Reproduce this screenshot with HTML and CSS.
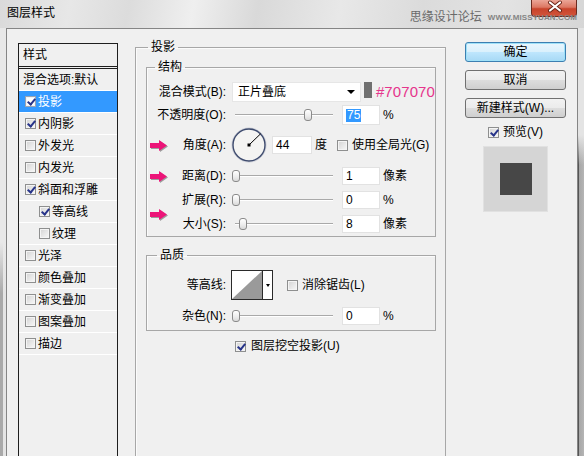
FILE: index.html
```html
<!DOCTYPE html>
<html lang="zh">
<head>
<meta charset="utf-8">
<title>图层样式</title>
<link rel="stylesheet" href="styles.css">
</head>
<body>
<div class="window">
  <div class="titlebar">
    <span class="title">图层样式</span>
    <div class="wm">
      <span class="wm-cn">思缘设计论坛</span>
      <span class="wm-url">WWW.MISSYUAN.COM</span>
    </div>
    <div class="close">
      <svg width="46" height="17" viewBox="0 0 46 17">
        <path d="M19 3.5 L29 11.5 M29 3.5 L19 11.5" stroke="#6a2418" stroke-width="4" stroke-linecap="round"/>
        <path d="M19 3.5 L29 11.5 M29 3.5 L19 11.5" stroke="#ffffff" stroke-width="2.2" stroke-linecap="round"/>
      </svg>
    </div>
  </div>
  <div class="frame">
    <div class="lframe"></div>
    <div class="content">
      <div class="stylelist">
        <div class="list-head">样式</div>
        <div class="list-item plain">混合选项:默认</div>
        <div class="list-item sel"><span class="cb on"></span>投影</div>
        <div class="list-item"><span class="cb on"></span>内阴影</div>
        <div class="list-item"><span class="cb"></span>外发光</div>
        <div class="list-item"><span class="cb"></span>内发光</div>
        <div class="list-item"><span class="cb on"></span>斜面和浮雕</div>
        <div class="list-item sub"><span class="cb on"></span>等高线</div>
        <div class="list-item sub"><span class="cb"></span>纹理</div>
        <div class="list-item"><span class="cb"></span>光泽</div>
        <div class="list-item"><span class="cb"></span>颜色叠加</div>
        <div class="list-item"><span class="cb"></span>渐变叠加</div>
        <div class="list-item"><span class="cb"></span>图案叠加</div>
        <div class="list-item"><span class="cb"></span>描边</div>
      </div>

      <fieldset class="group outer">
        <legend class="lg-outer">投影</legend>

        <fieldset class="group inner struct">
          <legend class="lg-struct">结构</legend>

          <div class="row r1">
            <div class="lbl">混合模式(B):</div>
            <div class="select"><span>正片叠底</span><span class="tri"></span></div>
            <span class="swatch"></span>
            <span class="hex">#707070</span>
          </div>

          <div class="row r2">
            <div class="lbl">不透明度(O):</div>
            <div class="slider"><span class="thumb" style="left:72px"></span></div>
            <div class="num"><span class="selected">75</span></div>
            <span class="unit">%</span>
          </div>

          <div class="row r3">
            <div class="lbl"><svg class="arrow" width="19" height="13" viewBox="0 0 19 13"><polygon points="1,4 10,4 10,1 18,6.5 10,12 10,9 1,9" fill="#ec1478"/></svg><span class="lt">角度(A):</span></div>
            <svg class="dial" width="36" height="36" viewBox="0 0 36 36">
              <circle cx="18" cy="18" r="17" fill="#f4f4f2" stroke="#c9ccd6" stroke-width="1"/>
              <circle cx="18" cy="18" r="16" fill="none" stroke="#3d4a6d" stroke-width="1.4"/>
              <line x1="18" y1="18" x2="29.5" y2="6.9" stroke="#000" stroke-width="1"/>
              <rect x="16.5" y="16.5" width="3" height="3" fill="#000"/>
            </svg>
            <div class="num w40">44</div>
            <span class="unit">度</span>
            <span class="cb gl"></span>
            <span class="cbtext">使用全局光(G)</span>
          </div>

          <div class="row r4">
            <div class="lbl"><svg class="arrow" width="19" height="13" viewBox="0 0 19 13"><polygon points="1,4 10,4 10,1 18,6.5 10,12 10,9 1,9" fill="#ec1478"/></svg><span class="lt">距离(D):</span></div>
            <div class="slider"><span class="thumb" style="left:0px"></span></div>
            <div class="num h18">1</div>
            <span class="unit">像素</span>
          </div>

          <div class="row r5">
            <div class="lbl"><span class="lt">扩展(R):</span></div>
            <div class="slider"><span class="thumb" style="left:0px"></span></div>
            <div class="num h18">0</div>
            <span class="unit">%</span>
          </div>

          <div class="row r6">
            <div class="lbl"><svg class="arrow up" width="19" height="13" viewBox="0 0 19 13"><polygon points="1,4 10,4 10,1 18,6.5 10,12 10,9 1,9" fill="#ec1478"/></svg><span class="lt">大小(S):</span></div>
            <div class="slider"><span class="thumb" style="left:7px"></span></div>
            <div class="num h18">8</div>
            <span class="unit">像素</span>
          </div>
        </fieldset>

        <fieldset class="group inner quality">
          <legend class="lg-quality">品质</legend>
          <div class="row q1">
            <div class="lbl">等高线:</div>
            <div class="contour">
              <svg width="30" height="28" viewBox="0 0 30 28"><polygon points="0,28 30,0 30,28" fill="#9a9a9a"/></svg>
              <span class="carrow"><span class="tri small"></span></span>
            </div>
            <span class="cb aa"></span>
            <span class="cbtext">消除锯齿(L)</span>
          </div>
          <div class="row q2">
            <div class="lbl">杂色(N):</div>
            <div class="slider"><span class="thumb" style="left:0px"></span></div>
            <div class="num h18">0</div>
            <span class="unit">%</span>
          </div>
        </fieldset>

        <div class="knock"><span class="cb on"></span><span class="cbtext">图层挖空投影(U)</span></div>
      </fieldset>

      <div class="side">
        <div class="btn primary">确定</div>
        <div class="btn">取消</div>
        <div class="btn">新建样式(W)...</div>
        <div class="preview-toggle"><span class="cb on"></span><span class="cbtext">预览(V)</span></div>
        <div class="preview"><span class="preview-sq"></span></div>
      </div>
    </div>
    <div class="rframe"></div>
  </div>
</div>
</body>
</html>
```

FILE: styles.css
```css
* { box-sizing: border-box; }

html, body {
  margin: 0;
  padding: 0;
}

body {
  width: 584px;
  height: 456px;
  overflow: hidden;
  background: #f0f0f0;
  color: #000;
  font-family: "Liberation Sans", "Noto Sans CJK SC", sans-serif;
  font-size: 12px;
  line-height: 16px;
}

.window {
  display: flex;
  flex-direction: column;
  height: 456px;
  overflow: hidden;
}

/* ---------- title bar ---------- */
.titlebar {
  position: relative;
  height: 28px;
  flex: none;
  display: flex;
  align-items: flex-start;
  background: linear-gradient(100deg, #dadada 0%, #e7e7e7 12%, #dcdcdc 22%, #efefef 33%, #d9d9d9 44%, #e8e8e8 58%, #dbdbdb 72%, #e3e3e3 86%, #d6d6d6 100%);
}

.title {
  padding: 5px 0 0 7px;
  font-size: 12px;
  line-height: 16px;
  color: #000;
}

.wm {
  position: relative;
  z-index: 2;
  margin-left: auto;
  margin-right: 7px;
  margin-top: 9px;
  height: 16px;
  display: flex;
  align-items: center;
  gap: 6px;
}

.wm-cn {
  font-size: 12px;
  color: #6a6a6a;
}

.wm-url {
  font-size: 8px;
  line-height: 10px;
  font-weight: bold;
  color: #858585;
  letter-spacing: 0.1px;
  margin-top: 2px;
}

.close {
  position: absolute;
  top: 0;
  right: 7px;
  width: 46px;
  height: 17px;
  border: 1px solid #6b2b20;
  border-top: none;
  border-radius: 0 0 4px 4px;
  background: linear-gradient(to bottom, #eba597 0%, #dc7763 45%, #c8432b 55%, #d1553c 100%);
  overflow: hidden;
}
.close svg { display: block; margin: -1px 0 0 -1px; }

/* ---------- frame ---------- */
.frame {
  flex: 1;
  display: flex;
  min-height: 0;
  overflow: hidden;
}

.lframe {
  width: 6px;
  flex: none;
  background:
    linear-gradient(to bottom, rgba(232,232,232,1) 0%, rgba(232,232,232,1) 50%, rgba(232,232,232,0) 62%),
    linear-gradient(to right, #a9a9a9 0, #a9a9a9 3px, #e4e4e4 3px, #e4e4e4 6px);
}

.rframe {
  width: 6px;
  flex: none;
  background:
    linear-gradient(to bottom, rgba(228,228,228,1) 0%, rgba(228,228,228,1) 25%, rgba(228,228,228,0) 32%),
    linear-gradient(to right, #555 0, #555 1px, #a6a6a6 1px, #b5b5b5 6px);
}

.content {
  width: 572px;
  flex: none;
  border: 1px solid #858585;
  border-bottom: none;
  background: #f0f0f0;
  display: flex;
  align-items: flex-start;
  padding: 10px 0 0 11px;
  overflow: hidden;
}

/* ---------- checkbox ---------- */
.cb {
  position: relative;
  width: 11px;
  height: 11px;
  flex: none;
  border: 1px solid #8e8f8f;
  background: linear-gradient(135deg, #d2d2d2 0%, #e6e6e6 50%, #f8f8f8 100%);
  box-shadow: inset 0 0 0 1px #f4f4f4;
}
.cb.on::after {
  content: "";
  position: absolute;
  left: 3px;
  top: 0px;
  width: 3px;
  height: 6px;
  border-right: 2px solid #27348a;
  border-bottom: 2px solid #27348a;
  transform: rotate(40deg);
}
.cbtext { margin-left: 4px; white-space: nowrap; }

/* ---------- style list ---------- */
.stylelist {
  width: 100px;
  height: 413px;
  flex: none;
  margin-top: 4px;
  border: 1px solid #1e1e1e;
  border-bottom: none;
  background: #f0f0f0;
}

.list-head {
  height: 25px;
  line-height: 22px;
  padding-left: 4px;
  border-bottom: 3px double #1e1e1e;
}

.list-item {
  height: 22px;
  display: flex;
  align-items: center;
  padding-left: 6px;
  border-bottom: 1px solid #ffffff;
  white-space: nowrap;
}
.list-item .cb { margin-right: 2px; }
.list-item.plain { padding-left: 4px; }
.list-item.sub { padding-left: 20px; }
.list-item.sel {
  background: #3399ff;
  color: #fff;
}
.list-item.sel .cb { background: #fff; border-color: #9aa4b4; }

/* ---------- group boxes ---------- */
fieldset.group {
  margin: 0;
  min-width: 0;
  border: 1px solid #a7a7a7;
  box-shadow: inset 1px 1px 0 #fbfbfb;
}

legend {
  padding: 0 3px;
  font-size: 12px;
  line-height: 16px;
}

.outer {
  width: 311px;
  height: 417px;
  flex: none;
  margin-left: 17px !important;
  padding: 4px 9px 0 10px;
  border-bottom: none !important;
}
.lg-outer { margin-left: 2px; }

.inner {
  width: 290px;
  padding: 0;
}
.struct { padding-top: 6px; }
.lg-struct { margin-left: 8px; }

.quality {
  margin-top: 10px !important;
  padding-top: 7px;
  padding-bottom: 2px;
}
.lg-quality { margin-left: 10px; }

/* ---------- rows ---------- */
.row {
  display: flex;
  align-items: center;
  white-space: nowrap;
}
.r1 { height: 22px; }
.r2 { height: 24px; }
.r3 { height: 36px; }
.r4 { height: 26px; }
.r5 { height: 22px; }
.r6 { height: 25px; }
.q1 { height: 30px; }
.q2 { height: 25px; margin-top: 3px; }

.lbl {
  width: 79px;
  flex: none;
  margin-right: 6px;
  display: flex;
  align-items: center;
  justify-content: flex-end;
  height: 100%;
}
.lbl .arrow {
  margin-left: 2px;
  margin-right: auto;
  filter: drop-shadow(1px 1px 0.6px rgba(0,0,0,0.35));
}
.lbl .arrow.up { align-self: flex-start; margin-top: -3px; }

.select {
  width: 138px;
  height: 20px;
  background: #fff;
  border: 1px solid #e6e6e6;
  display: flex;
  align-items: center;
  justify-content: space-between;
  padding: 0 5px 0 5px;
}
.tri {
  width: 0;
  height: 0;
  border-left: 4px solid transparent;
  border-right: 4px solid transparent;
  border-top: 4px solid #000;
}
.tri.small {
  border-left-width: 2.5px;
  border-right-width: 2.5px;
  border-top-width: 3px;
}

.swatch {
  width: 9px;
  height: 16px;
  margin-left: 3px;
  align-self: flex-start;
  margin-top: 1px;
  background: #707070;
}
.hex {
  margin-left: 4px;
  font-size: 15px;
  color: #e6358c;
  letter-spacing: 0.1px;
}

.slider {
  position: relative;
  width: 101px;
  height: 14px;
  flex: none;
}
.slider::before {
  content: "";
  position: absolute;
  left: 3px;
  right: 0;
  top: 6px;
  height: 2px;
  background: linear-gradient(to bottom, #a9a9a9 0, #a9a9a9 1px, #ffffff 1px);
}
.thumb {
  position: absolute;
  top: 1px;
  width: 8px;
  height: 12px;
  border: 1px solid #8b8b8b;
  border-radius: 3px;
  background: linear-gradient(to bottom, #ffffff 0%, #ececec 60%, #d8d8d8 100%);
}

.num {
  width: 38px;
  height: 20px;
  margin-left: 9px;
  background: #fff;
  border: 1px solid #e2e2e2;
  padding: 0 0 0 3px;
  display: flex;
  align-items: center;
  font-size: 12px;
}
.num.h18 { height: 18px; }
.num.w40 { width: 40px; height: 18px; margin-left: 5px; }
.selected {
  background: #3399ff;
  color: #fff;
  padding: 0 1px;
  line-height: 13px;
}

.unit { margin-left: 3px; }

.dial {
  margin-left: -1px;
  flex: none;
}

.cb.gl { margin-left: 10px; }

.contour {
  margin-left: -1px;
  display: flex;
  height: 30px;
  border: 1px solid #2a2a2a;
  background: #fff;
}
.contour svg { display: block; }
.carrow {
  width: 10px;
  border-left: 1px solid #2a2a2a;
  display: flex;
  align-items: center;
  justify-content: center;
}
.cb.aa { margin-left: 14px; }

.knock {
  display: flex;
  align-items: center;
  height: 16px;
  margin-top: 7px;
  padding-left: 89px;
}
.knock .cbtext { margin-left: 5px; }

/* ---------- right side ---------- */
.side {
  width: 101px;
  flex: none;
  margin-left: 19px;
  margin-top: 3px;
  display: flex;
  flex-direction: column;
  align-items: center;
}

.btn {
  width: 101px;
  height: 20px;
  margin-bottom: 8px;
  border: 1px solid #707070;
  border-radius: 3px;
  background: linear-gradient(to bottom, #f2f2f2 0%, #ebebeb 50%, #dddddd 51%, #cfcfcf 100%);
  display: flex;
  align-items: center;
  justify-content: center;
  white-space: nowrap;
}
.btn.primary {
  border-color: #3c7fb1;
  background: linear-gradient(to bottom, #eaf6fd 0%, #d9f0fc 50%, #bee6fd 51%, #a7d9f5 100%);
  box-shadow: 0 0 0 1px #9fe1f8 inset;
}

.preview-toggle {
  display: flex;
  align-items: center;
  height: 16px;
  margin-top: -2px;
}

.preview {
  width: 65px;
  height: 66px;
  margin-top: 6px;
  background: #d5d5d5;
  border: 1px solid #e1e1e1;
  display: flex;
  align-items: center;
  justify-content: center;
}
.preview-sq {
  width: 32px;
  height: 32px;
  background: #474747;
}
```
